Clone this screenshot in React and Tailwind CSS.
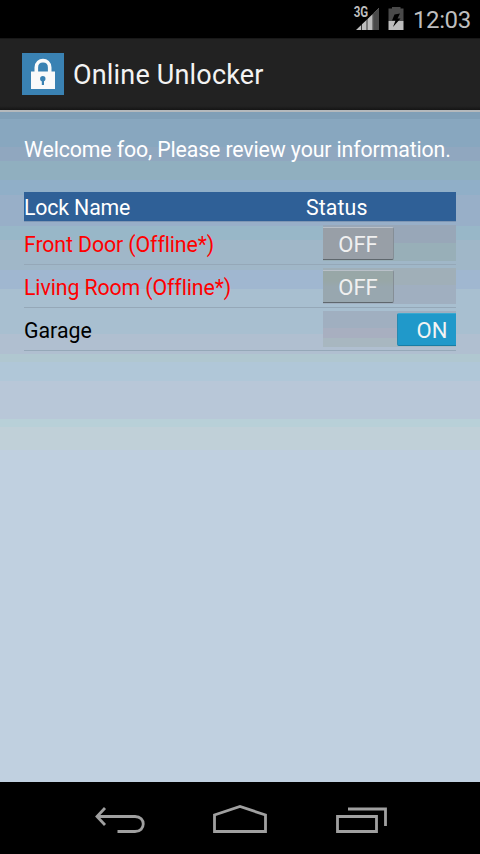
const locks = [
  {
    name: 'Front Door (Offline*)',
    on: false,
    offline: true,
    track: 'bg-[linear-gradient(to_bottom,#98a7b8_0_18px,#98afb8_18px)]',
    thumb: 'bg-[#989fa7]',
  },
  {
    name: 'Living Room (Offline*)',
    on: false,
    offline: true,
    track: 'bg-[linear-gradient(to_bottom,#a0afb8_0_17px,#a0afc0_17px)]',
    thumb: 'bg-[linear-gradient(to_bottom,#98a7a7_0_10px,#98a7af_16px)]',
  },
  {
    name: 'Garage',
    on: true,
    offline: false,
    track: 'bg-[linear-gradient(to_bottom,#a0afc0_0_17px,#a8afc0_17px_27px,#a8b7c0_27px)]',
    thumb: 'bg-[#2099ca]',
  },
];

const bandedSky =
  'bg-[linear-gradient(to_bottom,#809fb7_0_7px,#88a7bf_7px_35px,#90a7bf_35px_49px,#90afbf_49px_68px,#90afc8_68px_83px,#98afc8_83px_114px,#98b7c8_114px_128px,#a0b7c8_128px_158px,#a0b7d0_158px_177px,#a8bfd0_177px_222px,#b0bfd0_222px_242px,#b0c7d0_242px_250px,#b0c7d8_250px_269px,#b8c7d8_269px_307px,#b8d0d8_307px_315px,#c0d0d8_315px_338px,#c0d0e0_338px)]';

function StatusBar() {
  return (
    <header className="flex h-[38px] shrink-0 items-start justify-end bg-black">
      <svg className="mt-[4px]" width="52" height="28" viewBox="352 4 52 28">
        <path d="M356 30L379 8V30Z" fill="#bebebe" />
        <path d="M373.500 13L379 8V30H373.500Z" fill="#4a4a4a" />
        <path d="M361.500 20V30M367 18V30M373 12V30" stroke="#000" strokeWidth="0.700" />
        <rect x="352" y="4" width="16.500" height="14" fill="#000" />
        <text x="353.700" y="17" fill="#bebebe" fontSize="14" fontWeight="700" fontFamily="Roboto, sans-serif" textLength="14.500" lengthAdjust="spacingAndGlyphs">3G</text>
        <path d="M392 8.500V7H400.500V8.500H403.500V21H388.500V8.500Z" fill="#4a4a4a" />
        <path d="M388.500 21H403.500V30H388.500Z" fill="#bebebe" />
        <path d="M394.500 14.500L400 13.500L397.500 18.500H400.500L393 27L395.500 20.500H392Z" fill="#000" />
      </svg>
      <span className="mr-[9px] ml-[9px] mt-[4px] block w-[58px] whitespace-nowrap text-[24px] leading-8 tracking-[-0.4px] text-[#bebebe]">12:03</span>
    </header>
  );
}

function ActionBar() {
  return (
    <div className="flex h-[74px] shrink-0 items-center border-t border-b-2 border-t-[#181818] border-b-[#b5b9bc] bg-[linear-gradient(to_bottom,#222_0_67px,#151515_71px)] pb-[2px] pl-[22px]">
      <svg width="42" height="42" viewBox="0 0 42 42">
        <rect width="42" height="42" fill="#3a82b3" />
        <path d="M14.300 20V14.500C14.300 5.300 27.700 5.300 27.700 14.500V20" fill="none" stroke="#fafafa" strokeWidth="3.600" />
        <rect x="9" y="18.500" width="24" height="17.500" fill="#fafafa" />
        <circle cx="20.800" cy="25.800" r="2.700" fill="#3a82b3" />
        <path d="M19.800 27H22V32H19.800Z" fill="#3a82b3" />
      </svg>
      <h1 className="ml-[9px] mt-[2px] text-[27px] leading-8 tracking-[0.18px] text-[#f3f3f3]">Online Unlocker</h1>
    </div>
  );
}

function Toggle({ on, track, thumb }) {
  return (
    <div className={`flex h-9 w-[133px] items-start overflow-hidden pt-[2px] ${track}`}>
      {on ? (
        <div className={`ml-[74px] flex h-[33px] w-[74px] shrink-0 items-center justify-center rounded-[2px] border-b border-l border-t border-b-[#187da6] border-l-[#2789b0] border-t-[#3aa9d0] pt-[2px] text-[22px] leading-none text-[#f3f3f3] ${thumb}`}>
          <span className="-ml-[5px]">ON</span>
        </div>
      ) : (
        <div className={`flex h-[33px] w-[71px] items-center justify-center rounded-r-[2px] border-b border-r border-t border-b-[#5f676d] border-r-[#858e96] border-t-[#b9c0c8] pt-[2px] text-[22px] leading-none text-[#f0f0f0] ${thumb}`}>OFF</div>
      )}
    </div>
  );
}

function LockTable() {
  return (
    <section className="mt-[27px]">
      <div className="flex h-[30px] items-center border-b border-[#7f97b4] bg-[#2f6097] text-[21.3px] text-white">
        <span className="w-[282px] pt-[3px] tracking-[-0.15px]">Lock Name</span>
        <span className="pt-[3px] tracking-[0.1px]">Status</span>
      </div>
      {locks.map(({ name, on, offline, track, thumb }) => (
        <div key={name} className="flex h-[43px] items-start justify-between border-b border-[#95a8b8] pt-[3px]">
          <span className={`mt-[6px] text-[21.3px] leading-7 [font-variant-ligatures:none] ${offline ? 'tracking-[-0.1px] text-[#ff0000]' : 'text-black'}`}>{name}</span>
          <Toggle on={on} track={track} thumb={thumb} />
        </div>
      ))}
    </section>
  );
}

function NavigationBar() {
  return (
    <nav className="h-[72px] shrink-0 bg-black">
      <svg width="480" height="72" viewBox="0 782 480 72" fill="none" stroke="#a0a0a0" strokeWidth="2.800">
        <path d="M105 808L97 816.500L105 825M97 816.500H135C146 816.500 146 831.500 135 831.500H117.500" />
        <path d="M214.500 831.500V815L240 806.500L265.500 815V831.500Z" />
        <path d="M337.500 816.500H376.500V831.500H337.500ZM348 809H385.500V826" />
      </svg>
    </nav>
  );
}

export default function App() {
  return (
    <div className="flex h-[854px] w-[480px] flex-col overflow-hidden font-[Roboto,sans-serif]">
      <StatusBar />
      <ActionBar />
      <main className={`flex-1 px-6 pt-[23px] ${bandedSky}`}>
        <p className="whitespace-nowrap text-[21.3px] leading-[30px] tracking-[-0.12px] text-white">Welcome foo, Please review your information.</p>
        <LockTable />
      </main>
      <NavigationBar />
    </div>
  );
}
